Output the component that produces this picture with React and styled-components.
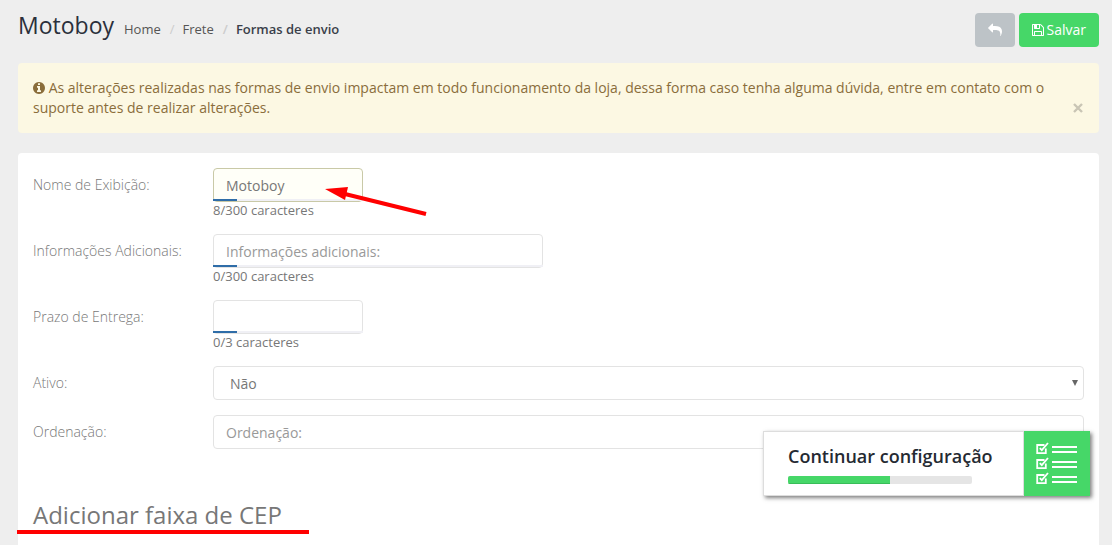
import React, {useState} from 'react';
import styled, {createGlobalStyle} from 'styled-components';

const GREEN = '#46d768';
const BACKGROUND = '#eeeeee';
const TEXT = '#777777';
const BORDER = '#e3e3e3';
const WARNING = '#8a6d3b';
const MARK = '#ff0000';

const GlobalStyle = createGlobalStyle`
  * {
    box-sizing: border-box;
  }

  body {
    margin: 0;
    font-family: 'Open Sans', sans-serif;
    font-size: 14px;
    line-height: 20px;
    color: ${TEXT};
    background: ${BACKGROUND};
  }
`;

const Page = styled.div`
  display: flex;
  flex-direction: column;
  gap: 20px;
  min-height: 100vh;
  padding: 13px 13px 0 18px;
`;

const Header = styled.header`
  display: flex;
  justify-content: space-between;
  height: 30px;
`;

const Heading = styled.div`
  display: flex;
  align-items: baseline;
  gap: 10px;
`;

const Title = styled.h1`
  margin: 0;
  font-size: 23px;
  font-weight: 400;
  line-height: 25px;
  color: #2b303b;
`;

const Breadcrumb = styled.ol`
  display: flex;
  margin: 0;
  padding: 0;
  list-style: none;
  font-size: 13px;
  color: #3a3f4a;

  li + li::before {
    content: '/';
    padding: 0 8px 0 9px;
    color: #cccccc;
  }

  a {
    color: #555555;
    text-decoration: none;
  }
`;

const Current = styled.li`
  font-weight: 600;
`;

const Actions = styled.div`
  display: flex;
  gap: 4px;
`;

const Button = styled.button`
  display: flex;
  align-items: center;
  justify-content: center;
  gap: 3px;
  height: 34px;
  padding: 0 13px;
  border: 0;
  border-radius: 4px;
  font: inherit;
  color: white;
  background: ${props => props.$primary ? GREEN : '#bdc3c7'};
`;

const Alert = styled.div`
  display: flex;
  align-items: flex-end;
  padding: 15px;
  border-radius: 4px;
  color: ${WARNING};
  background: #fcf8e3;

  p {
    flex: 1;
    margin: 0;
    padding-right: 20px;
  }
`;

const InfoIcon = styled.svg`
  vertical-align: -1px;
`;

const Close = styled.button`
  display: flex;
  align-items: center;
  height: 20px;
  padding: 0;
  border: 0;
  color: #c9c5b5;
  background: none;
`;

const Panel = styled.main`
  flex: 1;
  padding: 15px;
  border-radius: 4px 4px 0 0;
  background: white;
`;

const Row = styled.div`
  display: grid;
  grid-template-columns: 180px 1fr;
  margin-bottom: 15px;
`;

const Label = styled.label`
  padding-top: 7px;
  font-weight: 300;
`;

const Box = styled.div`
  position: relative;
  width: ${props => props.$width || '100%'};
  height: 34px;
`;

const Input = styled.input`
  display: block;
  width: 100%;
  height: 34px;
  padding: 0 12px;
  border: 1px solid ${props => props.$filled ? '#c9c9a7' : BORDER};
  border-radius: 4px;
  outline: 0;
  font: inherit;
  color: ${TEXT};
  background: ${props => props.$filled ? '#fffff8' : 'white'};

  &::placeholder {
    color: #999999;
    opacity: 1;
  }
`;

const Select = styled.select`
  display: block;
  width: 100%;
  height: 34px;
  padding: 2px 16px 0;
  border: 1px solid ${BORDER};
  border-radius: 4px;
  appearance: none;
  font: inherit;
  color: ${TEXT};
  background: white;
`;

const SelectArrow = styled.svg`
  position: absolute;
  top: 14px;
  right: 6px;
  pointer-events: none;
`;

const Meter = styled.div`
  position: absolute;
  left: 0;
  right: 0;
  bottom: 1px;
  height: 2px;
  background: #f0f0f5;

  &::before {
    content: '';
    display: block;
    width: 24px;
    height: 2px;
    background: #2f6da8;
  }
`;

const Help = styled.div`
  font-size: 13px;
  line-height: 17px;
`;

const Arrow = styled.svg`
  position: absolute;
  top: 17px;
  left: 112px;
  pointer-events: none;
`;

const Section = styled.h2`
  position: relative;
  width: fit-content;
  margin: 50px 0 0;
  font-size: 24px;
  font-weight: 400;
  line-height: 32px;

  &::after {
    content: '';
    position: absolute;
    left: -16px;
    right: -27px;
    bottom: -3px;
    height: 4px;
    background: ${MARK};
  }
`;

const Widget = styled.aside`
  position: fixed;
  right: 22px;
  bottom: 49px;
  display: flex;
  height: 65px;
  box-shadow: 2px 2px 4px rgba(0, 0, 0, 0.5);
`;

const WidgetBody = styled.div`
  width: 261px;
  padding: 12px 24px;
  border: 1px solid #dddddd;
  background: white;
`;

const WidgetTitle = styled.div`
  font-size: 18px;
  font-weight: 600;
  line-height: 24px;
  white-space: nowrap;
  color: #252a32;
`;

const Progress = styled.div`
  width: 184px;
  height: 8px;
  margin-top: 8px;
  border-radius: 2px;
  overflow: hidden;
  background: #e5e5e5;
`;

const ProgressFill = styled.div`
  height: 100%;
  background: ${GREEN};
  box-shadow: inset 0 -1px 0 #38bd58;
`;

const WidgetButton = styled.button`
  display: flex;
  align-items: center;
  justify-content: center;
  width: 66px;
  padding: 0;
  border: 0;
  background: ${GREEN};
`;

const ReplyIcon = () => (
  <svg width="14" height="14" viewBox="0 0 1792 1792" fill="currentColor" aria-hidden="true">
    <path d="M1792 1120q0 166-127 451-3 7-10.5 24t-13.5 30-13 22q-12 17-28 17-15 0-23.5-10t-8.5-25q0-9 2.5-26.5t2.5-23.5q5-68 5-123 0-101-17.5-181t-48.5-138.5-80-101-105.5-69.5-133-42.5-154-21.5-175.5-6h-224v256q0 26-19 45t-45 19-45-19l-512-512q-19-19-19-45t19-45l512-512q19-19 45-19t45 19 19 45v256h224q713 0 875 403 53 134 53 333z"/>
  </svg>
);

const SaveIcon = () => (
  <svg width="12" height="12" viewBox="128 128 1536 1536" fill="currentColor" aria-hidden="true">
    <path d="M512 1536h768v-384h-768v384zm896 0h128v-896q0-14-10-38.5t-20-34.5l-281-281q-10-10-34-20t-39-10v416q0 40-28 68t-68 28h-576q-40 0-68-28t-28-68v-416h-128v1280h128v-416q0-40 28-68t68-28h832q40 0 68 28t28 68v416zm-384-928v-320q0-13-9.5-22.5t-22.5-9.5h-192q-13 0-22.5 9.5t-9.5 22.5v320q0 13 9.5 22.5t22.5 9.5h192q13 0 22.5-9.5t9.5-22.5zm640 32v928q0 40-28 68t-68 28h-1344q-40 0-68-28t-28-68v-1344q0-40 28-68t68-28h928q40 0 88 20t76 48l280 280q28 28 48 76t20 88z"/>
  </svg>
);

const ChecklistIcon = () => (
  <svg width="42" height="43" viewBox="0 0 42 43" fill="none" stroke="white" aria-hidden="true">
    {[0, 15, 30].map(y => (
      <g key={y} transform={`translate(0 ${y})`}>
        <path d="M8.5 3H1.2V11.2H9.8V6.5" strokeWidth="1.8"/>
        <path d="M3.8 6.2L5.8 8.2L12 1" strokeWidth="1.8"/>
        <path d="M16 5h25M16 10h25" strokeWidth="1.8"/>
      </g>
    ))}
  </svg>
);

function Field({id, label, width, max, value: initial = '', placeholder, children}) {
  const [value, setValue] = useState(initial);

  return (
    <Row>
      <Label htmlFor={id}>{label}</Label>
      <div>
        <Box $width={width}>
          <Input
            id={id}
            value={value}
            placeholder={placeholder}
            $filled={Boolean(initial)}
            onChange={event => setValue(event.target.value)}
          />
          {max && <Meter/>}
          {children}
        </Box>
        {max && <Help>{value.length}/{max} caracteres</Help>}
      </div>
    </Row>
  );
}

export default function App() {
  const progress = 102 / 184 * 100;

  return (
    <>
      <GlobalStyle/>
      <Page>
        <Header>
          <Heading>
            <Title>Motoboy</Title>
            <Breadcrumb>
              <li><a href="#home">Home</a></li>
              <li><a href="#frete">Frete</a></li>
              <Current>Formas de envio</Current>
            </Breadcrumb>
          </Heading>
          <Actions>
            <Button type="button" aria-label="Voltar"><ReplyIcon/></Button>
            <Button type="button" $primary><SaveIcon/>Salvar</Button>
          </Actions>
        </Header>

        <Alert role="alert">
          <p>
            <InfoIcon width="12" height="12" viewBox="128 128 1536 1536" fill="currentColor" aria-hidden="true">
              <path d="M1152 1376v-160q0-14-9-23t-23-9h-96v-512q0-14-9-23t-23-9h-320q-14 0-23 9t-9 23v160q0 14 9 23t23 9h96v320h-96q-14 0-23 9t-9 23v160q0 14 9 23t23 9h448q14 0 23-9t9-23zm-128-896v-160q0-14-9-23t-23-9h-192q-14 0-23 9t-9 23v160q0 14 9 23t23 9h192q14 0 23-9t9-23zm640 416q0 209-103 385.5t-279.5 279.5-385.5 103-385.5-103-279.5-279.5-103-385.5 103-385.5 279.5-279.5 385.5-103 385.5 103 279.5 279.5 103 385.5z"/>
            </InfoIcon>
            {' '}As alterações realizadas nas formas de envio impactam em todo funcionamento da loja, dessa forma caso tenha alguma dúvida, entre em contato com o suporte antes de realizar alterações.
          </p>
          <Close type="button" aria-label="Fechar">
            <svg width="12" height="10" viewBox="0 0 12 10" stroke="currentColor" strokeWidth="2.4">
              <path d="M2 1l8 8M10 1L2 9"/>
            </svg>
          </Close>
        </Alert>

        <Panel>
          <Field id="nome" label="Nome de Exibição:" width="150px" max={300} value="Motoboy ">
            <Arrow width="104" height="32" viewBox="0 0 104 32" aria-hidden="true">
              <path d="M20 9L101 29" stroke={MARK} strokeWidth="4"/>
              <path d="M0 4L23 2L20 15z" fill={MARK}/>
            </Arrow>
          </Field>
          <Field id="info" label="Informações Adicionais:" width="330px" max={300} placeholder="Informações adicionais:"/>
          <Field id="prazo" label="Prazo de Entrega:" width="150px" max={3}/>
          <Row>
            <Label htmlFor="ativo">Ativo:</Label>
            <Box>
              <Select id="ativo" defaultValue="nao">
                <option value="nao">Não</option>
                <option value="sim">Sim</option>
              </Select>
              <SelectArrow width="6" height="6" viewBox="0 0 6 6" aria-hidden="true">
                <path d="M0 0h6L3 6z" fill="#666666"/>
              </SelectArrow>
            </Box>
          </Row>
          <Field id="ordem" label="Ordenação:" placeholder="Ordenação:"/>

          <Section>Adicionar faixa de CEP</Section>
        </Panel>
      </Page>

      <Widget>
        <WidgetBody>
          <WidgetTitle>Continuar configuração</WidgetTitle>
          <Progress>
            <ProgressFill style={{width: `${progress}%`}}/>
          </Progress>
        </WidgetBody>
        <WidgetButton type="button" aria-label="Abrir configuração">
          <ChecklistIcon/>
        </WidgetButton>
      </Widget>
    </>
  );
}
